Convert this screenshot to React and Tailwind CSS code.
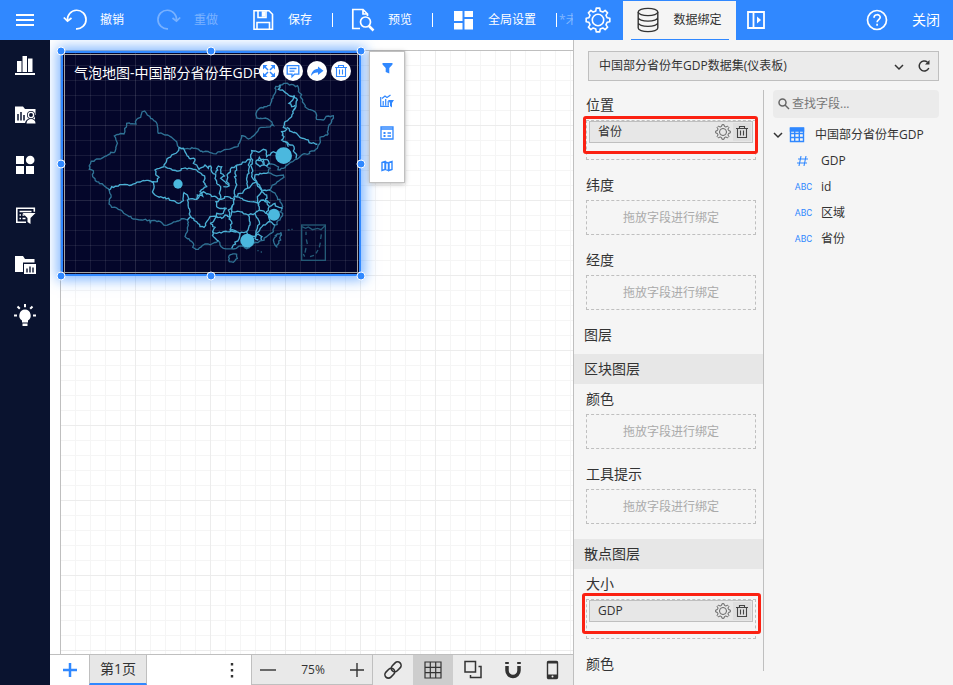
import React from "react";

const OUTLINE = [
  "117 378 122 368 135 360 160 352 180 342 195 335 200 315 198 300 193 288 205 284 222 282 224 265 230 250 258 252 260 238 272 232 276 216 284 213 292 225 302 235 315 243 322 258 325 280 345 285 365 292 380 305 387 322 400 325 430 325 455 333 490 341 530 328 550 323 565 318 572 300 575 287 595 297 615 283 625 270 640 262 670 256 665 245 650 236 620 234 618 225 628 205 650 200 662 190 665 178 675 160 675 145 690 135 705 130 725 133 745 142 750 160 758 180 765 200 785 210 798 220 800 238 820 240 835 228 850 227 845 245 835 262 832 285 820 290 810 292 808 312 802 325 785 333 772 343 755 345 745 355 728 365 700 385 690 390 680 378 660 372 650 378",
  "117 378 118 388 130 392 128 410 140 425 160 435 178 452 183 465 178 478 177 492 185 502 205 508 225 522 250 537 275 540 298 540 301 550 303 542 325 543 345 556 365 550 385 543 400 536 412 540 415 555 412 575 405 590 420 602 430 610 428 622 445 628 452 622 465 612 485 612 505 603 510 615 520 625 550 627 570 618 590 626 610 612",
  "650 378 660 385 655 398 680 408 700 405 702 412 682 425 665 440 660 450 678 465 690 485 698 500 690 515 698 520 690 540 675 555 670 575 650 590 635 602 610 612",
  "535 650 545 643 560 643 562 655 550 667 538 665 535 650",
  "693 577 682 582 670 600 672 608 680 620 692 600 693 577",
];

const PROVINCES = [
  "387 322 383 335 365 345 350 360 342 380 328 385 315 390 318 405 327 412 322 425 305 427",
  "178 450 185 440 205 438 225 433 245 435 270 426 290 421 310 428 310 460 320 468 345 472 365 482 385 490 400 482 402 458 412 465 415 478 440 478 442 465 458 468 450 455 470 440 460 425 465 415 455 402 440 390 430 388 400 385 380 393 345 380",
  "387 322 400 325 408 340 418 355 435 358 430 370 440 375 447 388 465 375 475 385 482 378 485 395 497 403 495 415 500 430 512 440 508 460 512 475",
  "497 400 505 378 515 380 512 400 525 408 512 415 525 425 537 438 520 440",
  "440 478 450 462 460 455 470 462 500 472 515 478 533 470 555 480",
  "412 478 415 500 420 515 422 530 412 540",
  "422 530 440 545 450 560 462 562 470 545 480 530 500 530 500 520 520 520 530 505 515 505 500 500 498 485 515 478",
  "480 550 490 545 500 530 515 535 525 525 540 530 535 510 548 495",
  "480 550 495 562 488 575 500 580 520 575 545 573 560 575",
  "488 575 490 590 505 603",
  "540 530 545 545 542 575",
  "690 135 685 148 700 152 715 165 732 168 728 180 717 190 725 200 735 195",
  "732 168 742 180 738 200 728 215 725 230 705 245 700 262 710 268 695 275 702 290 695 300 705 305 715 320",
  "710 262 725 275 740 280 750 292 775 300 785 310 802 312",
  "705 305 720 315 732 320 730 333 740 345 738 356",
  "700 365 685 345 670 335 660 345 650 350 648 330 640 328 630 335 605 332 602 345 608 360 602 375 608 395 605 410 620 425",
  "618 362 628 352 640 358 642 375 630 380 618 370 618 362",
  "622 360 634 362 640 372 650 378 658 370 655 362 640 358",
  "560 375 590 362 602 358 595 375 597 400 590 420 592 445 570 460 558 470",
  "560 375 555 400 558 430 555 465 548 495 545 515",
  "560 375 545 382 535 400 530 425 537 438",
  "592 445 620 425 630 440 635 455 622 470 625 490 600 485 580 480 555 468",
  "620 425 615 405 630 400 655 398",
  "620 425 632 448 645 450 660 450",
  "545 515 570 515 595 525 615 520 628 510 625 490 640 480 660 490",
  "635 455 650 465 645 485 658 500 650 520 628 512",
  "658 500 675 490 682 500 698 505",
  "650 520 660 545 675 555",
  "545 515 538 540",
  "542 570 560 575 570 580 590 575 600 555 595 525",
  "615 520 628 545 622 565 615 590 595 585 590 575",
  "660 545 640 555 625 575 615 595 625 600",
  "570 580 565 600 550 615 545 625",
  "615 585 625 582 636 590 634 600",
];

// Breaks straight segments into small irregular steps, as on a surveyed border.
function ruggedPath(source) {
  const n = source.split(" ").map(Number);
  let seed = n[0] * 31 + n[1] * 17;
  const noise = () => {
    seed = (seed * 1103515245 + 12345) % 2147483648;
    return (seed / 2147483648 - 0.5) * 6;
  };
  let d = `M${n[0]} ${n[1]}`;
  for (let i = 2; i < n.length; i += 2) {
    const [x0, y0, x1, y1] = [n[i - 2], n[i - 1], n[i], n[i + 1]];
    const steps = Math.max(1, Math.round(Math.hypot(x1 - x0, y1 - y0) / 6));
    for (let s = 1; s < steps; s++) {
      const t = s / steps;
      d += `L${(x0 + (x1 - x0) * t + noise()).toFixed(1)} ${(y0 + (y1 - y0) * t + noise()).toFixed(1)}`;
    }
    d += `L${x1} ${y1}`;
  }
  return d;
}

function Svg({ size = 24, w, h, children, className = "", ...rest }) {
  return (
    <svg aria-hidden="true" width={w || size} height={h || size} viewBox={`0 0 ${w || size} ${h || size}`} fill="none" stroke="currentColor" className={`shrink-0 ${className}`} {...rest}>
      {children}
    </svg>
  );
}

function gearPath(c, teeth, ri, ro) {
  let d = "";
  const step = (Math.PI * 2) / teeth;
  for (let i = 0; i < teeth; i++) {
    const a = i * step - Math.PI / 2;
    [[-0.3, ri], [-0.19, ro], [0.19, ro], [0.3, ri]].forEach(([o, r]) => {
      const t = a + o * step;
      d += `${d ? "L" : "M"}${(c + Math.cos(t) * r).toFixed(2)} ${(c + Math.sin(t) * r).toFixed(2)}`;
    });
  }
  return d + "Z";
}

const Gear = ({ size = 26, sw = 1.6 }) => (
  <Svg size={size} strokeWidth={sw} strokeLinejoin="round">
    <path d={gearPath(size / 2, 8, size * 0.36, size * 0.46)} />
    <circle cx={size / 2} cy={size / 2} r={size * 0.22} />
  </Svg>
);

const Trash = ({ size = 14 }) => (
  <svg aria-hidden="true" width={size} height={size} viewBox="0 0 14 14" fill="none" stroke="currentColor" strokeWidth="1.1">
    <path d="M1 3.500h12M4.500 3.200V1.500h5v1.700M2.500 3.500v9h9v-9M5.500 5.500v5M8.500 5.500v5" />
  </svg>
);

const Chevron = () => (
  <Svg size={10} strokeWidth="1.5"><path d="M1 3l4 4 4-4" /></Svg>
);

const UndoIcon = () => (
  <Svg strokeWidth="1.7"><path d="M4.500 12.500A9.300 9.300 0 1 1 13 20.800" /><path d="M.8 9.500l3.700 3.700 4-3.200" /></Svg>
);
const RedoIcon = () => (
  <Svg strokeWidth="1.7"><path d="M19.500 12.500A9.300 9.300 0 1 0 11 20.800" /><path d="M23.200 9.500l-3.700 3.700-4-3.200" /></Svg>
);
const SaveIcon = () => (
  <Svg strokeWidth="1.6"><path d="M3 2.800h15l3.500 3.500v15H3z" /><path d="M7 3v6.500h8V3M6 21v-6.500h12.500V21" /><path d="M11.500 4h2v4h-2z" fill="currentColor" /></Svg>
);
const PreviewIcon = () => (
  <Svg strokeWidth="1.7"><path d="M9 20.500H1.800v-19H12l4.500 4.500v2M12 1.500V6h4" /><circle cx="14.500" cy="14" r="5" /><path d="M18 18l4.500 4.500" strokeWidth="2.500" /></Svg>
);
const DashIcon = () => (
  <Svg stroke="none" fill="currentColor"><path d="M3 3h8.500v10H3zM13.500 3H22v6h-8.500zM3 15h8.500v6.500H3zM13.500 11H22v10.500h-8.500z" /></Svg>
);

const HeaderAction = ({ icon, children, disabled }) => (
  <button disabled={disabled} className="flex h-10 shrink-0 items-center gap-[13px] whitespace-nowrap text-xs disabled:opacity-35">
    {icon}{children}
  </button>
);
const Divider = () => <span className="ml-5 mr-[18px] h-3.5 w-px shrink-0 bg-white" />;

function Header() {
  return (
    <header className="flex h-10 shrink-0 bg-[#3088ff] text-white">
      <button aria-label="菜单" className="flex w-[50px] shrink-0 items-center justify-center">
        <Svg w={18} h={14} strokeWidth="2"><path d="M0 2h18M0 7h18M0 12h18" /></Svg>
      </button>
      <div className="flex min-w-0 flex-1 items-center overflow-hidden pl-[13px]">
        <div className="flex gap-[33px]">
          <HeaderAction icon={<UndoIcon />}>撤销</HeaderAction>
          <HeaderAction icon={<RedoIcon />} disabled>重做</HeaderAction>
          <HeaderAction icon={<SaveIcon />}>保存</HeaderAction>
        </div>
        <Divider />
        <HeaderAction icon={<PreviewIcon />}>预览</HeaderAction>
        <Divider />
        <HeaderAction icon={<DashIcon />}>全局设置</HeaderAction>
        <span className="ml-5 mr-0.5 h-3.5 w-px shrink-0 bg-white" />
        <span className="min-w-0 flex-1 overflow-hidden whitespace-nowrap text-xs text-white/40">*未</span>
      </div>
      <div className="flex w-[380px] shrink-0">
        <button aria-label="设置" className="flex w-[50px] items-center justify-center"><Gear /></button>
        <button className="mt-px flex w-[113px] flex-col items-center bg-[#f5f5f5] text-xs text-[#333]">
          <span className="flex flex-1 items-center gap-[14px]">
            <Svg w={22} h={26} strokeWidth="1.4">
              <ellipse cx="11" cy="5" rx="9.800" ry="3.600" />
              <path d="M1.200 5v16c0 2 4.400 3.600 9.800 3.600s9.800-1.600 9.800-3.600V5M1.200 10.500c0 2 4.400 3.600 9.800 3.600s9.800-1.600 9.800-3.600M1.200 15.800c0 2 4.400 3.600 9.800 3.600s9.800-1.600 9.800-3.600" />
            </Svg>
            数据绑定
          </span>
          <span className="h-px w-[98px] bg-[#3088ff]" />
        </button>
        <button aria-label="折叠面板" className="flex w-10 items-center justify-center">
          <Svg size={18} strokeWidth="1.800"><path d="M1 1h16v16H1zM6.500 1v16" /><path d="M10 5.500v7l4-3.500z" fill="currentColor" stroke="none" /></Svg>
        </button>
        <div className="flex-1" />
        <button aria-label="帮助" className="flex items-center">
          <Svg size={22} strokeWidth="1.700"><circle cx="11" cy="11" r="9.500" /><path d="M8 8.700c0-4 6.200-3.800 6.200-.4 0 2.200-3.100 2.500-3.100 5M11.100 14.800v1.900" /></Svg>
        </button>
        <button className="ml-6 pr-[13px] text-sm">关闭</button>
      </div>
    </header>
  );
}

const SIDE_ITEMS = [
  ["图表", <g key="a"><path d="M3 7h4.500v11H3zM8.500 2H13v16H8.500zM14 4.500h4.500V18H14z" /><path d="M1 19h20v2H1z" /></g>],
  ["报表用户", <g key="b"><path d="M1 2.500h8l2 2.500h10.500v6H21v8H1z" /><path d="M4 10v6.500M7 8v8.500M10 11v5.500" stroke="#0a132f" strokeWidth="1.500" /><circle cx="17" cy="11" r="4" fill="#0a132f" /><path d="M11 20c0-3.500 2.500-5.500 6-5.500s6 2 6 5.500z" fill="#0a132f" /><circle cx="17" cy="11" r="2.600" fill="none" stroke="white" strokeWidth="1.300" /><path d="M12.500 19.500c0-3 2-4.500 4.500-4.500s4.500 1.500 4.500 4.500z" /></g>],
  ["组件", <g key="c"><path d="M2 2h8v8H2zM2 12h8v8H2zM12 12h8v8h-8z" /><circle cx="16.200" cy="6" r="4.300" /></g>],
  ["筛选", <g key="d"><path d="M12 18.200H2.800v-14h17.500v3.500M5.500 7.500h12M5.500 11h1.500M8.500 11h2M5.500 14.500h1.500M8.500 14.500h3" fill="none" stroke="white" strokeWidth="1.600" /><path d="M8.500 9H21.500L16.500 14v6l-3-2v-4z" /></g>],
  ["资源", <g key="e"><path d="M1 2h8l2 3h9.500v3.500H9V18H1z" /><path d="M10 10h12v10H10z" /><path d="M13 18.500v-4M16 18.500v-6M19 18.500v-5" stroke="#0a132f" strokeWidth="1.400" /></g>],
  ["提示", <g key="f"><path d="M11 5.500a6 6 0 0 1 3 11v2H8v-2a6 6 0 0 1 3-11zM8.500 19.500h5V22h-5z" /><path d="M11 0v3.200M3.500 2.500l2.300 2.300M18.500 2.500l-2.300 2.300M0 11.500h3M22 11.500h-3" stroke="white" strokeWidth="2" /></g>],
];

function Sidebar() {
  return (
    <nav className="flex w-[50px] shrink-0 flex-col bg-[#0a132f]">
      {SIDE_ITEMS.map(([label, art]) => (
        <button key={label} aria-label={label} className="flex h-[50px] items-center justify-center text-white">
          <Svg w={22} h={22} fill="currentColor" stroke="none">{art}</Svg>
        </button>
      ))}
    </nav>
  );
}

const HANDLES = [
  "left-0 top-0", "left-1/2 top-0", "left-full top-0", "left-0 top-1/2",
  "left-full top-1/2", "left-0 top-full", "left-1/2 top-full", "left-full top-full",
];

const WIDGET_TOOLS = [
  ["展开", <g key="a"><path d="M3 3l3 3M11 3L8 6M11 11L8 8M3 11l3-3" strokeWidth="1.500" /><path d="M1 1h4.500L1 5.500zM13 1v4.500L8.500 1zM13 13H8.500L13 8.500zM1 13V8.500L5.500 13z" fill="currentColor" stroke="none" /></g>],
  ["备注", <path key="b" d="M1.200 1.700h11.600v8.500H8.500l-2.500 2.500v-2.500H1.200zM3.500 4.500h7M3.500 7.200h5" strokeWidth="1.300" />],
  ["分享", <path key="c" d="M8 2.500l5.500 4.300L8 11V8.500C5 8.300 3 9.300 1 12c.3-4 3-7 7-7.200z" fill="currentColor" stroke="none" />],
];

const SIDE_TOOLS = [
  ["过滤", <path key="a" d="M2.500 2h10v1.500L9.300 7v5.500L5.700 11V7L2.500 3.500z" fill="currentColor" stroke="none" />],
  ["图表转换", <g key="b"><path d="M.7 3v9.300H9M3.200 11.500V7M5.700 11.500V5M8.200 11.500V7M2 4.500L5 2l2 1.500L10.500 1" strokeWidth="1.200" /><path d="M8 6h6l-2 3v4.500L10 12V9z" fill="currentColor" stroke="none" /></g>],
  ["属性", <g key="c"><path d="M1 1h12v12H1zM1 3h12M7.500 7H11M7.500 10H11" strokeWidth="1.300" /><path d="M3.500 6h2v2h-2zM3.500 9h2v2h-2z" fill="currentColor" stroke="none" /></g>],
  ["地图", <g key="d"><path d="M2 3.500l3-1v8l-3 1zM9 3.500l3-1v8l-3 1z" strokeWidth="1.400" /><path d="M5 2l4 1.500v9L5 11z" fill="currentColor" stroke="none" /><path d="M7 4.500v6" stroke="white" strokeWidth="1.500" /></g>],
];

function MapChart() {
  return (
    <svg role="img" aria-label="中国地图" className="absolute inset-0 size-full" viewBox="33 33 900 675" fill="none" strokeWidth="4">
      <g stroke="#2f7294">{OUTLINE.map((s) => <path key={s} d={ruggedPath(s)} />)}</g>
      <g stroke="#4bb0d5">{PROVINCES.map((s) => <path key={s} d={ruggedPath(s)} />)}</g>
      <g stroke="#245a76">
        <rect x="755" y="555" width="71" height="106" />
        <path d="M755 560l12 5 8-4 12 8 16-4 10 4 12-12M768 575v10M769 598l3 14M768 624l-3 14M760 642l4 8M780 650l12-4M798 640l6-10M808 622l3-14M812 597l2-14M713 570h6M724 568h4M622 632h4M632 636h4" />
      </g>
      <g fill="#4bb8de"><circle cx="384" cy="432" r="14" /><circle cx="701" cy="347" r="25" /><circle cx="672" cy="524" r="18" /><circle cx="592" cy="602" r="21" /></g>
    </svg>
  );
}

function Canvas() {
  return (
    <div className="min-h-0 flex-1 overflow-hidden bg-white pl-2.5 pt-2.5">
      <div className="relative h-full border-l border-t border-[#bfbfbf] bg-[linear-gradient(#ececec_1px,transparent_1px),linear-gradient(90deg,#ececec_1px,transparent_1px),linear-gradient(#f5f5f5_1px,transparent_1px),linear-gradient(90deg,#f5f5f5_1px,transparent_1px)] bg-[size:75px_75px,75px_75px,15px_15px,15px_15px] bg-[position:-1px_-1px]">
        <section className="absolute left-0 top-0 h-[225px] w-[300px] bg-[#04062a] shadow-[0_0_12px_4px_#3088ff99]">
          <div className="absolute inset-0 bg-[linear-gradient(#ffffff0c_1px,transparent_1px),linear-gradient(90deg,#ffffff0c_1px,transparent_1px),linear-gradient(#ffffff14_1px,transparent_1px),linear-gradient(90deg,#ffffff14_1px,transparent_1px)] bg-[size:75px_75px,75px_75px,15px_15px,15px_15px] bg-[position:-1px_-1px]" />
          <MapChart />
          <div className="absolute inset-0 border-2 border-[#3088ff]" />
          <div className="absolute inset-[3px] border border-[#a5a5a5]" />
          <h2 className="absolute left-[13px] top-3 whitespace-nowrap text-sm leading-5 text-white">气泡地图-中国部分省份年GDP</h2>
          <div className="absolute right-[10px] top-[10px] flex gap-1 text-[#3088ff]">
            {WIDGET_TOOLS.map(([label, art]) => (
              <button key={label} aria-label={label} className="flex size-5 items-center justify-center rounded-full bg-white"><Svg size={14}>{art}</Svg></button>
            ))}
            <button aria-label="删除" className="flex size-5 items-center justify-center rounded-full bg-white"><Trash /></button>
          </div>
          {HANDLES.map((place) => (
            <span key={place} className={`absolute size-[9px] -translate-x-1/2 -translate-y-1/2 rounded-full border border-white bg-[#3088ff] ${place}`} />
          ))}
        </section>
        <div className="absolute left-[308px] top-0 flex h-[132px] w-9 flex-col justify-around border border-[#c0c0c0] bg-white text-[#3088ff] shadow-[0_1px_5px_#0004]">
          {SIDE_TOOLS.map(([label, art]) => (
            <button key={label} aria-label={label} className="flex h-8 items-center justify-center"><Svg size={14}>{art}</Svg></button>
          ))}
        </div>
      </div>
    </div>
  );
}

const TOGGLES = [
  ["链接", <g key="a" strokeWidth="1.600"><g transform="rotate(-45 10 10)"><rect x="0" y="6.500" width="11" height="7" rx="3.500" /><rect x="9" y="6.500" width="11" height="7" rx="3.500" /></g></g>],
  ["网格", <path key="b" d="M2 2h16v16H2zM7.300 2v16M12.700 2v16M2 7.300h16M2 12.700h16" strokeWidth="1.200" />],
  ["图层", <path key="c" d="M2 1.500h10.500V12H2zM15.500 6.500H18V17.500H7.500V15" strokeWidth="1.500" />],
  ["吸附", <g key="d"><path d="M4 6v4.500a6 6 0 0 0 12 0V6" strokeWidth="3.500" /><path d="M2.200 2h3.600v2H2.200zM14.200 2h3.600v2h-3.600z" fill="currentColor" stroke="none" /></g>],
  ["移动端", <g key="e"><rect x="4.500" y="1.500" width="10" height="17" rx="1" strokeWidth="1.400" /><path d="M4.500 14.500h10V18h-10zM4.500 1.500h10v2h-10z" fill="currentColor" stroke="none" /><circle cx="9.500" cy="16.500" r="1" fill="#ebebeb" stroke="none" /></g>],
];

function Footer() {
  return (
    <footer className="flex h-[31px] shrink-0 border-t border-[#bfbfbf] bg-white text-[#333]">
      <button aria-label="添加页面" className="flex w-[39px] items-center justify-center text-[#3088ff]"><Svg size={16} strokeWidth="2.500"><path d="M8 1v14M1 8h14" /></Svg></button>
      <button className="w-[58px] border-x border-b-2 border-x-[#bfbfbf] border-b-[#3088ff] bg-[#e7e7e7] text-sm leading-5">第1页</button>
      <div className="flex-1" />
      <button aria-label="更多" className="flex w-[38px] items-center justify-center"><Svg w={4} h={16} fill="currentColor" stroke="none"><path d="M.800 1h2.400v2.400H.8zM.8 7h2.400v2.400H.8zM.8 13h2.400v2.400H.8z" /></Svg></button>
      <div className="flex w-[122px] items-center border-x border-b border-[#bfbfbf] bg-[#e9e9e9]">
        <button aria-label="缩小" className="flex w-8 justify-center"><Svg size={16} strokeWidth="1.400"><path d="M0 8h16" /></Svg></button>
        <span className="flex-1 text-center text-xs">75%</span>
        <button aria-label="放大" className="flex w-[30px] justify-center"><Svg size={16} strokeWidth="1.400"><path d="M1 8h14M8 1v14" /></Svg></button>
      </div>
      {TOGGLES.map(([label, art], i) => (
        <button key={label} aria-label={label} aria-pressed={i === 1} className="flex w-10 items-center justify-center bg-[#ebebeb] aria-pressed:bg-[#cdcdcd]"><Svg size={20}>{art}</Svg></button>
      ))}
    </footer>
  );
}

const Label = ({ children }) => <h3 className="px-3 text-sm leading-[30px]">{children}</h3>;
const Band = ({ children }) => <h2 className="bg-[#e7e7e7] px-2.5 text-sm leading-[30px]">{children}</h2>;

function Empty({ label }) {
  return (
    <div>
      <Label>{label}</Label>
      <div className="ml-3 mr-[7px] flex h-[35px] items-center justify-center border border-dashed border-[#bfbfbf] text-xs text-[#aaa]">拖放字段进行绑定</div>
    </div>
  );
}

function Bound({ label, field, mark }) {
  return (
    <div>
      <Label>{label}</Label>
      <div className="relative ml-3 mr-[7px] h-10 border border-dashed border-[#bfbfbf] px-0.5">
        <div className="flex h-[22px] items-center border border-[#bfbfbf] bg-[#e7e7e7] pl-2 pr-px text-xs">
          <span className="flex-1">{field}</span>
          <button aria-label="字段设置" className="flex w-5 justify-center text-[#666]"><Gear size={16} sw={1} /></button>
          <button aria-label="移除字段" className="flex h-[18px] w-[18px] items-center justify-center bg-[#dedede] text-[#444]"><Trash size={14} /></button>
        </div>
        <span className={`pointer-events-none absolute rounded-[3px] border-3 border-[#fb2112] ${mark}`} />
      </div>
    </div>
  );
}

function Bindings() {
  return (
    <div className="flex w-[190px] shrink-0 flex-col border-r border-[#bfbfbf]">
      <div className="flex flex-col gap-2.5">
        <Bound label="位置" field="省份" mark="-left-1 -right-[3px] -top-[5px] bottom-[5px]" />
        <Empty label="纬度" />
        <Empty label="经度" />
        <h2 className="px-2.5 text-sm leading-[30px]">图层</h2>
      </div>
      <div className="mt-1"><Band>区块图层</Band></div>
      <div className="flex flex-col gap-2.5">
        <Empty label="颜色" />
        <Empty label="工具提示" />
      </div>
      <div className="mt-[15px]"><Band>散点图层</Band></div>
      <div className="flex flex-col gap-2.5">
        <Bound label="大小" field="GDP" mark="-left-[5px] -right-1.5 -top-[7px] bottom-[4px]" />
        <Label>颜色</Label>
      </div>
    </div>
  );
}

const Abc = () => <span className="w-[19px] shrink-0 font-['Liberation_Sans_Narrow','Roboto',sans-serif] text-[9px] text-[#3088ff]">ABC</span>;

function Fields() {
  return (
    <div className="min-w-0 flex-1 pl-[9px] pr-3.5 text-xs">
      <label className="flex h-7 items-center gap-0.5 rounded-sm bg-[#ebebeb] pl-[5px] text-[#666]">
        <Svg size={12} strokeWidth="1.500"><circle cx="4.500" cy="4.500" r="3.500" /><path d="M7 7l4 4" /></Svg>
        <input aria-label="查找字段" placeholder="查找字段..." className="min-w-0 flex-1 bg-transparent outline-none placeholder:text-[#777]" />
      </label>
      <ul className="mt-1">
        <li>
          <button className="flex h-[26px] items-center whitespace-nowrap">
            <Chevron />
            <Svg size={16} className="ml-1.5 mr-2.5 text-[#3088ff]" strokeWidth="1.400"><path d="M1.500 1.500h13v13h-13zM1.500 6.500h13M1.500 10.500h13M5.700 4v10.500M10.300 4v10.500" /><path d="M1.500 1h13v3h-13z" fill="currentColor" /></Svg>
            中国部分省份年GDP
          </button>
          <ul className="pl-[21px]">
            {["GDP", "id", "区域", "省份"].map((name, i) => (
              <li key={name}>
                <button className="flex h-[26px] items-center gap-2">
                  {i === 0 ? <Svg w={19} h={12} className="text-[#3088ff]" strokeWidth="1.100"><path d="M7 1L5 11M12 1l-2 10M4 4h10M3 8h10" /></Svg> : <Abc />}
                  {name}
                </button>
              </li>
            ))}
          </ul>
        </li>
      </ul>
    </div>
  );
}

function DataPanel() {
  return (
    <aside className="flex w-[380px] shrink-0 flex-col border-l border-[#bfbfbf] bg-[#f5f5f5] text-[#333]">
      <div className="ml-3.5 mr-3.5 mt-[11px] flex h-[30px] shrink-0 items-center border border-[#bfbfbf] bg-[#ebebeb]">
        <div className="relative h-full min-w-0 flex-1">
          <select aria-label="数据集" className="h-full w-full appearance-none bg-transparent pl-2.5 text-xs">
            <option>中国部分省份年GDP数据集(仪表板)</option>
          </select>
          <span className="pointer-events-none absolute right-1.5 top-[10px]"><Chevron /></span>
        </div>
        <button aria-label="刷新" className="flex w-7 justify-center"><Svg size={14} strokeWidth="1.500"><path d="M11.800 9A5 5 0 1 1 10.500 3.200" /><path d="M12.500 1v4.500H8z" fill="currentColor" stroke="none" /></Svg></button>
      </div>
      <div className="mb-[14px] mt-[9px] flex min-h-0 flex-1">
        <Bindings />
        <Fields />
      </div>
    </aside>
  );
}

export default function App() {
  return (
    <div className="flex h-screen flex-col overflow-hidden font-['Open_Sans','Noto_Sans_CJK_SC',sans-serif]">
      <Header />
      <div className="flex min-h-0 flex-1">
        <Sidebar />
        <main className="flex min-w-0 flex-1 flex-col">
          <Canvas />
          <Footer />
        </main>
        <DataPanel />
      </div>
    </div>
  );
}
